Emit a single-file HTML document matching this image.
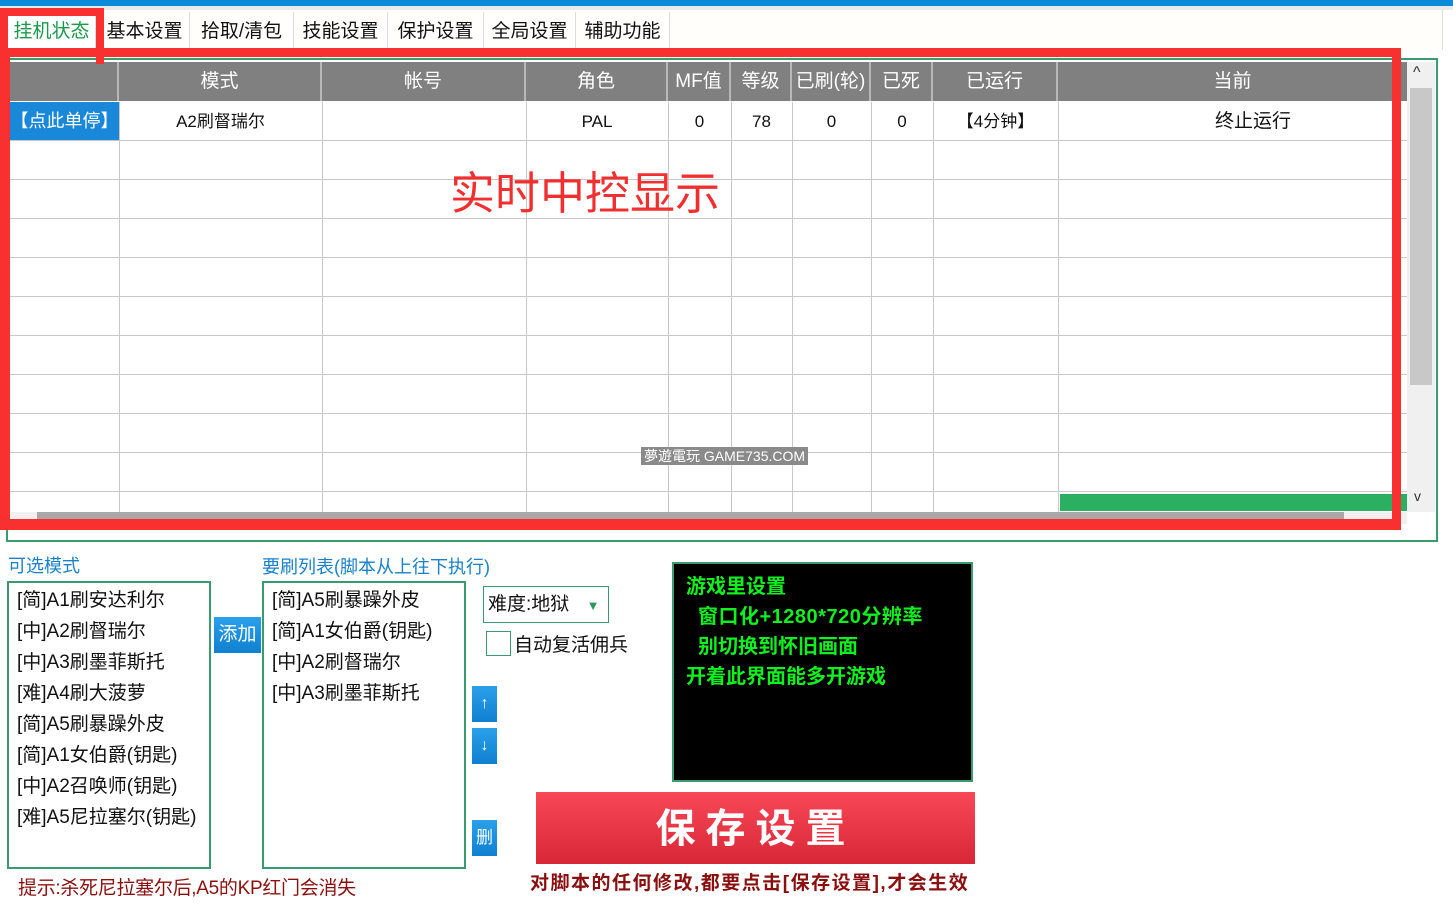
<!DOCTYPE html>
<html><head><meta charset="utf-8"><style>
*{margin:0;padding:0;box-sizing:border-box}
body{width:1453px;height:912px;background:#fff;position:relative;overflow:hidden;font-family:"Liberation Sans","Noto Sans CJK SC",sans-serif;color:#111}
.a{position:absolute}
.tab{position:absolute;top:12px;height:36px;font-size:19px;line-height:40px;text-align:center;border-right:1px solid #ddd;background:#fffefa}
.hd{position:absolute;top:62px;height:39px;background:#808080;color:#fff;font-size:19px;line-height:40px;text-align:center;border-right:2px solid #b8b8b8}
.c{position:absolute;font-size:17px;line-height:39px;text-align:center;top:102px}
.hl{position:absolute;left:10px;width:1397px;height:1px;background:#c8c8c8}
.vl{position:absolute;top:102px;height:410px;width:1px;background:#c8c8c8}
.li{font-size:19px;line-height:31px;padding-left:8px}
.bb{position:absolute;background:linear-gradient(#2aa0ea,#1080d0);color:#fff;text-align:center}
</style></head><body>
<div class="a" style="left:0;top:0;width:1453px;height:6px;background:#0a8ad8"></div>
<div class="a" style="left:0;top:6px;width:1453px;height:4px;background:#eaeaea"></div>
<div class="a" style="left:0;top:10px;width:1443px;height:40px;background:#fffefa;border-right:1px solid #ddd"></div>
<div class="tab" style="left:8px;width:88px;color:#1a9a4a;background:#fff">挂机状态</div>
<div class="tab" style="left:100px;width:90px">基本设置</div>
<div class="tab" style="left:190px;width:104px">拾取/清包</div>
<div class="tab" style="left:294px;width:94px">技能设置</div>
<div class="tab" style="left:388px;width:96px">保护设置</div>
<div class="tab" style="left:484px;width:92px">全局设置</div>
<div class="tab" style="left:576px;width:94px">辅助功能</div>
<div class="a" style="left:6px;top:58px;width:1432px;height:484px;border:2px solid #3a9a70;background:#fff"></div>
<div class="hd" style="left:10px;width:109px"></div>
<div class="hd" style="left:119px;width:203px">模式</div>
<div class="hd" style="left:322px;width:204px">帐号</div>
<div class="hd" style="left:526px;width:142px">角色</div>
<div class="hd" style="left:668px;width:63px">MF值</div>
<div class="hd" style="left:731px;width:61px">等级</div>
<div class="hd" style="left:792px;width:79px">已刷(轮)</div>
<div class="hd" style="left:871px;width:62px">已死</div>
<div class="hd" style="left:933px;width:125px">已运行</div>
<div class="hd" style="left:1058px;width:349px;border-right:none">当前</div>
<div class="hl" style="top:140px"></div><div class="hl" style="top:179px"></div><div class="hl" style="top:218px"></div><div class="hl" style="top:257px"></div><div class="hl" style="top:296px"></div><div class="hl" style="top:335px"></div><div class="hl" style="top:374px"></div><div class="hl" style="top:413px"></div><div class="hl" style="top:452px"></div><div class="hl" style="top:491px"></div>
<div class="vl" style="left:119px"></div><div class="vl" style="left:322px"></div><div class="vl" style="left:526px"></div><div class="vl" style="left:668px"></div><div class="vl" style="left:731px"></div><div class="vl" style="left:792px"></div><div class="vl" style="left:871px"></div><div class="vl" style="left:933px"></div><div class="vl" style="left:1058px"></div>
<div class="c" style="left:10px;width:109px;height:38px;background:#1a88d8;color:#fff;font-size:18px">【点此单停】</div>
<div class="c" style="left:119px;width:203px">A2刷督瑞尔</div>
<div class="c" style="left:526px;width:142px">PAL</div>
<div class="c" style="left:668px;width:63px">0</div>
<div class="c" style="left:731px;width:61px">78</div>
<div class="c" style="left:792px;width:79px">0</div>
<div class="c" style="left:871px;width:62px">0</div>
<div class="c" style="left:933px;width:125px">【4分钟】</div>
<div class="c" style="left:1058px;width:390px;font-size:19px">终止运行</div>
<div class="a" style="left:450px;top:166px;font-size:45px;color:#f03030;line-height:56px">实时中控显示</div>
<div class="a" style="left:641px;top:447px;background:#8a8a8a;color:#fff;font-size:14px;padding:0 3px;line-height:18px">夢遊電玩 GAME735.COM</div>
<div class="a" style="left:1060px;top:494px;width:347px;height:17px;background:#2ab060"></div>
<div class="a" style="left:1407px;top:62px;width:28px;height:450px;background:#f0f0f0"></div>
<div class="a" style="left:1410px;top:88px;width:22px;height:297px;background:#c8c8c8"></div>
<div class="a" style="left:1413px;top:64px;font-size:16px;color:#333">^</div>
<div class="a" style="left:1414px;top:488px;font-size:14px;color:#333">v</div>
<div class="a" style="left:10px;top:512px;width:1397px;height:12px;background:#f0f0f0"></div>
<div class="a" style="left:37px;top:512px;width:1307px;height:12px;background:#a8a8a8"></div>
<div class="a" style="left:0;top:8px;width:104px;height:56px;border:8px solid #f83030;border-bottom:none"></div>
<div class="a" style="left:0;top:48px;width:1401px;height:482px;border:9px solid #f83030;border-left-width:10px;border-bottom-width:11px"></div>
<div class="a" style="left:8px;top:552px;font-size:18px;color:#1a80c8">可选模式</div>
<div class="a" style="left:262px;top:553px;font-size:18px;color:#1a80c8">要刷列表(脚本从上往下执行)</div>
<div class="a li" style="left:7px;top:581px;width:204px;height:288px;border:2px solid #3a9a70;padding-top:2px">
<div>[简]A1刷安达利尔</div><div>[中]A2刷督瑞尔</div><div>[中]A3刷墨菲斯托</div><div>[难]A4刷大菠萝</div><div>[简]A5刷暴躁外皮</div><div>[简]A1女伯爵(钥匙)</div><div>[中]A2召唤师(钥匙)</div><div>[难]A5尼拉塞尔(钥匙)</div></div>
<div class="bb" style="left:214px;top:617px;width:47px;height:36px;font-size:19px;line-height:36px">添加</div>
<div class="a li" style="left:262px;top:581px;width:204px;height:288px;border:2px solid #3a9a70;padding-top:2px">
<div>[简]A5刷暴躁外皮</div><div>[简]A1女伯爵(钥匙)</div><div>[中]A2刷督瑞尔</div><div>[中]A3刷墨菲斯托</div></div>
<div class="a" style="left:483px;top:586px;width:126px;height:37px;border:1px solid #3a9a70;font-size:19px;line-height:36px;padding-left:4px">难度:地狱 <span style="color:#2a9a5a;font-size:13px;margin-left:12px">▼</span></div>
<div class="a" style="left:486px;top:631px;width:25px;height:25px;border:1px solid #3a9a70"></div>
<div class="a" style="left:514px;top:630px;font-size:19px">自动复活佣兵</div>
<div class="bb" style="left:472px;top:686px;width:25px;height:36px;font-size:16px;line-height:36px">↑</div>
<div class="bb" style="left:472px;top:728px;width:25px;height:36px;font-size:16px;line-height:36px">↓</div>
<div class="bb" style="left:472px;top:820px;width:25px;height:36px;font-size:17px;line-height:36px">删</div>
<div class="a" style="left:672px;top:562px;width:301px;height:220px;background:#000;border:2px solid #3a9a70;color:#10f020;font-size:20px;font-weight:bold;line-height:30px;padding:8px 0 0 12px;white-space:nowrap">
<div>游戏里设置</div><div style="padding-left:12px;letter-spacing:0.5px">窗口化+1280*720分辨率</div><div style="padding-left:12px">别切换到怀旧画面</div><div>开着此界面能多开游戏</div></div>
<div class="a" style="left:536px;top:792px;width:439px;height:72px;background:linear-gradient(#f84858,#d82838);color:#fff;font-size:40px;font-weight:bold;text-align:center;line-height:74px;letter-spacing:10px">保存设置</div>
<div class="a" style="left:530px;top:868px;font-size:19px;font-weight:bold;color:#8a1010;letter-spacing:1.5px;white-space:nowrap">对脚本的任何修改,都要点击[保存设置],才会生效</div>
<div class="a" style="left:18px;top:873px;font-size:19px;color:#8a1010;letter-spacing:-0.3px">提示:杀死尼拉塞尔后,A5的KP红门会消失</div>
</body></html>
